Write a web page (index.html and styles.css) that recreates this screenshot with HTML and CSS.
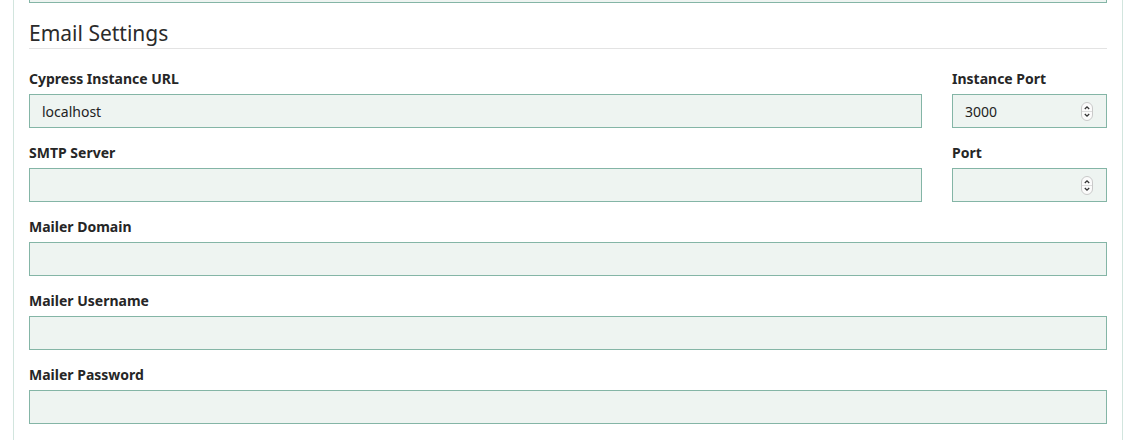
FILE: index.html
```html
<!DOCTYPE html>
<html lang="en">
<head>
    <meta charset="UTF-8">
    <meta name="viewport" content="width=device-width, initial-scale=1.0">
    <title>Email Settings</title>
    <link rel="stylesheet" href="styles.css">
</head>
<body>
    <div class="panel">
        <!-- tail of the previous section -->
        <div class="form-group prev-field">
            <input type="text" class="form-control">
        </div>

        <h3 class="section-title">Email Settings</h3>

        <div class="form-row">
            <div class="form-group">
                <label for="instance-url">Cypress Instance URL</label>
                <input type="text" id="instance-url" class="form-control" value="localhost">
            </div>
            <div class="form-group">
                <label for="instance-port">Instance Port</label>
                <div class="number-field">
                    <input type="number" id="instance-port" class="form-control" value="3000">
                    <svg class="stepper" width="12" height="19" viewBox="0 0 12 19">
                        <rect x="0.5" y="0.5" width="11" height="18" rx="5.5" fill="#fbfbfb" stroke="#c9c9c9"/>
                        <line x1="1" y1="9.5" x2="11" y2="9.5" stroke="#dddddd"/>
                        <path d="M3.8 7 L6 4.8 L8.2 7" fill="none" stroke="#333" stroke-width="1.3"/>
                        <path d="M3.8 12 L6 14.2 L8.2 12" fill="none" stroke="#333" stroke-width="1.3"/>
                    </svg>
                </div>
            </div>
        </div>

        <div class="form-row">
            <div class="form-group">
                <label for="smtp-server">SMTP Server</label>
                <input type="text" id="smtp-server" class="form-control">
            </div>
            <div class="form-group">
                <label for="smtp-port">Port</label>
                <div class="number-field">
                    <input type="number" id="smtp-port" class="form-control">
                    <svg class="stepper" width="12" height="19" viewBox="0 0 12 19">
                        <rect x="0.5" y="0.5" width="11" height="18" rx="5.5" fill="#fbfbfb" stroke="#c9c9c9"/>
                        <line x1="1" y1="9.5" x2="11" y2="9.5" stroke="#dddddd"/>
                        <path d="M3.8 7 L6 4.8 L8.2 7" fill="none" stroke="#333" stroke-width="1.3"/>
                        <path d="M3.8 12 L6 14.2 L8.2 12" fill="none" stroke="#333" stroke-width="1.3"/>
                    </svg>
                </div>
            </div>
        </div>

        <div class="form-group">
            <label for="mailer-domain">Mailer Domain</label>
            <input type="text" id="mailer-domain" class="form-control">
        </div>

        <div class="form-group">
            <label for="mailer-username">Mailer Username</label>
            <input type="text" id="mailer-username" class="form-control">
        </div>

        <div class="form-group">
            <label for="mailer-password">Mailer Password</label>
            <input type="password" id="mailer-password" class="form-control">
        </div>
    </div>
</body>
</html>
```

FILE: styles.css
```css
:root {
    --text-color: #333333;
    --label-color: #262626;
    --input-bg: #eef4f1;
    --input-border: #84b5a6;
    --panel-border: #d2e5de;
    --rule-color: #e3e3e3;
}

body {
    margin: 0;
    background-color: #ffffff;
    color: var(--text-color);
    font-family: "Noto Sans", "Open Sans", sans-serif;
    font-size: 14px;
    line-height: 1.5;
    overflow: hidden;
}

.panel {
    margin: 0 18px 0 13px;
    padding: 0 15px 2px;
    border-left: 1px solid var(--panel-border);
    border-right: 1px solid var(--panel-border);
}

.prev-field {
    margin-top: -31px;
    margin-bottom: 0;
}

.section-title {
    margin: 17px 0 19px;
    padding-bottom: 2px;
    font-size: 21px;
    font-weight: normal;
    line-height: 26px;
    color: #2b2b2b;
    border-bottom: 1px solid var(--rule-color);
}

.form-row {
    display: grid;
    grid-template-columns: 1fr 155px;
    gap: 30px;
}

.form-group {
    margin-bottom: 14px;
}

.form-group label {
    display: block;
    margin-bottom: 5px;
    font-weight: bold;
    color: var(--label-color);
}

.form-control {
    display: block;
    box-sizing: border-box;
    width: 100%;
    height: 34px;
    margin: 0;
    padding: 0 12px;
    font-family: inherit;
    font-size: 14px;
    color: #222222;
    background-color: var(--input-bg);
    border: 1px solid var(--input-border);
    border-radius: 0;
    outline: none;
}

.number-field {
    position: relative;
}

.number-field input {
    -moz-appearance: textfield;
}

.number-field input::-webkit-inner-spin-button,
.number-field input::-webkit-outer-spin-button {
    -webkit-appearance: none;
    margin: 0;
}

.stepper {
    position: absolute;
    right: 14px;
    top: 8px;
}
```
